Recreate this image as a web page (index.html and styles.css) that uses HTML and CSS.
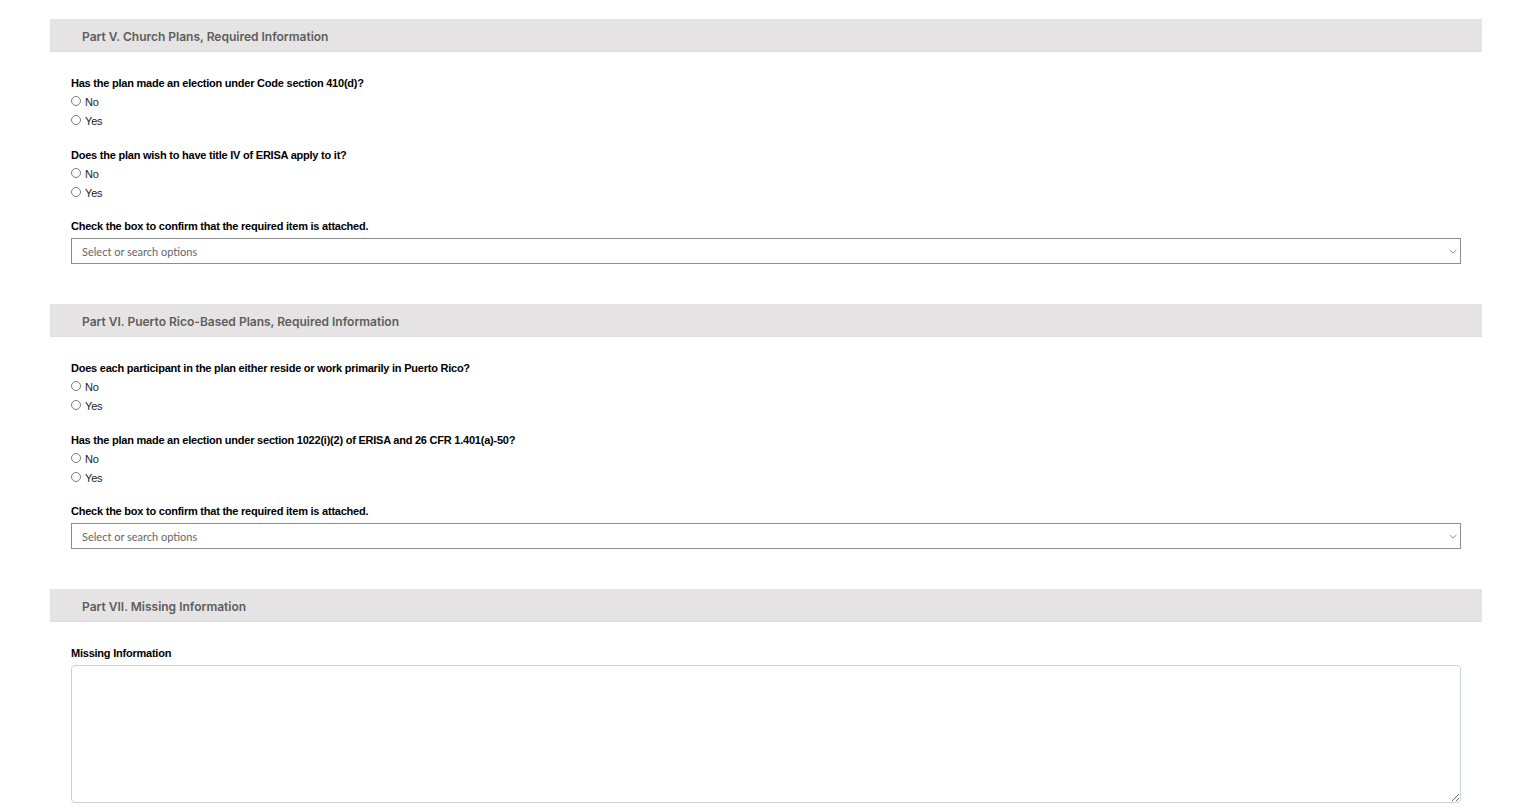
FILE: index.html
```html
<!DOCTYPE html>
<html>
<head>
<meta charset="utf-8">
<link rel="stylesheet" href="styles.css">
</head>
<body>
<div class="page">
  <section class="part">
    <div class="part-head">Part V. Church Plans, Required Information</div>
    <div class="part-body">
      <div class="q">
        <div class="q-label">Has the plan made an election under Code section 410(d)?</div>
        <label class="opt"><span class="radio"></span>No</label>
        <label class="opt"><span class="radio"></span>Yes</label>
      </div>
      <div class="q">
        <div class="q-label">Does the plan wish to have title IV of ERISA apply to it?</div>
        <label class="opt"><span class="radio"></span>No</label>
        <label class="opt"><span class="radio"></span>Yes</label>
      </div>
      <div class="q q-select">
        <div class="q-label">Check the box to confirm that the required item is attached.</div>
        <div class="select"><span class="ph">Select or search options</span>
          <svg class="chev" width="8" height="5" viewBox="0 0 8 5"><path d="M0.5 0.8 L4 4 L7.5 0.8" fill="none" stroke="#8a97a8" stroke-width="1"/></svg>
        </div>
      </div>
    </div>
  </section>

  <section class="part">
    <div class="part-head">Part VI. Puerto Rico-Based Plans, Required Information</div>
    <div class="part-body">
      <div class="q">
        <div class="q-label">Does each participant in the plan either reside or work primarily in Puerto Rico?</div>
        <label class="opt"><span class="radio"></span>No</label>
        <label class="opt"><span class="radio"></span>Yes</label>
      </div>
      <div class="q">
        <div class="q-label">Has the plan made an election under section 1022(i)(2) of ERISA and 26 CFR 1.401(a)-50?</div>
        <label class="opt"><span class="radio"></span>No</label>
        <label class="opt"><span class="radio"></span>Yes</label>
      </div>
      <div class="q q-select">
        <div class="q-label">Check the box to confirm that the required item is attached.</div>
        <div class="select"><span class="ph">Select or search options</span>
          <svg class="chev" width="8" height="5" viewBox="0 0 8 5"><path d="M0.5 0.8 L4 4 L7.5 0.8" fill="none" stroke="#8a97a8" stroke-width="1"/></svg>
        </div>
      </div>
    </div>
  </section>

  <section class="part">
    <div class="part-head">Part VII. Missing Information</div>
    <div class="part-body">
      <div class="q q-text">
        <div class="q-label">Missing Information</div>
        <textarea class="textarea"></textarea>
      </div>
    </div>
  </section>
</div>
</body>
</html>
```

FILE: styles.css
```css
* { box-sizing: border-box; }
html, body { margin: 0; padding: 0; background: #fff; }
body { font-family: "Liberation Sans", Arial, sans-serif; color: #000; }
.page { padding: 19px 45px 0 50px; }
.part { margin-bottom: 40px; }
.part-head {
  height: 33px;
  background: #e5e3e3;
  border-bottom: 1px solid #dedcdc;
  padding: 3px 0 0 32px;
  display: flex;
  align-items: center;
  font-family: "Inter", "Roboto", sans-serif;
  font-weight: 600;
  font-size: 12px;
  color: #5d5d5d;
}
.part-body { padding: 24px 21px 0 21px; display: flex; flex-direction: column; }
.q + .q { margin-top: 18px; }
.q + .q-select { margin-top: 17px; }
.q-label { font-weight: bold; font-size: 11px; letter-spacing: -0.23px; line-height: 14px; height: 14px; margin-bottom: 2px; }
.opt { display: flex; align-items: center; height: 19px; font-size: 11px; letter-spacing: -0.2px; color: #222; }
.radio {
  width: 10px; height: 10px; border: 1px solid #7a7a7a; border-radius: 50%;
  margin-right: 4px; background: #fff; flex: none; position: relative; top: -1px;
}
.q-select .q-label { margin-bottom: 5px; }
.select {
  height: 26px; border: 1px solid #8d8d8d; display: flex; align-items: center;
  padding: 0 3px 0 10px; justify-content: space-between;
}
.ph { font-family: "Lato", "Open Sans", sans-serif; font-size: 11px; color: #666; }
.chev { margin-top: 1px; }
.q-text .q-label { margin-bottom: 5px; }
.textarea {
  display: block; width: 100%; height: 138px; border: 1px solid #cdd2d8; border-radius: 4px;
  resize: vertical; font-family: inherit;
}
```
